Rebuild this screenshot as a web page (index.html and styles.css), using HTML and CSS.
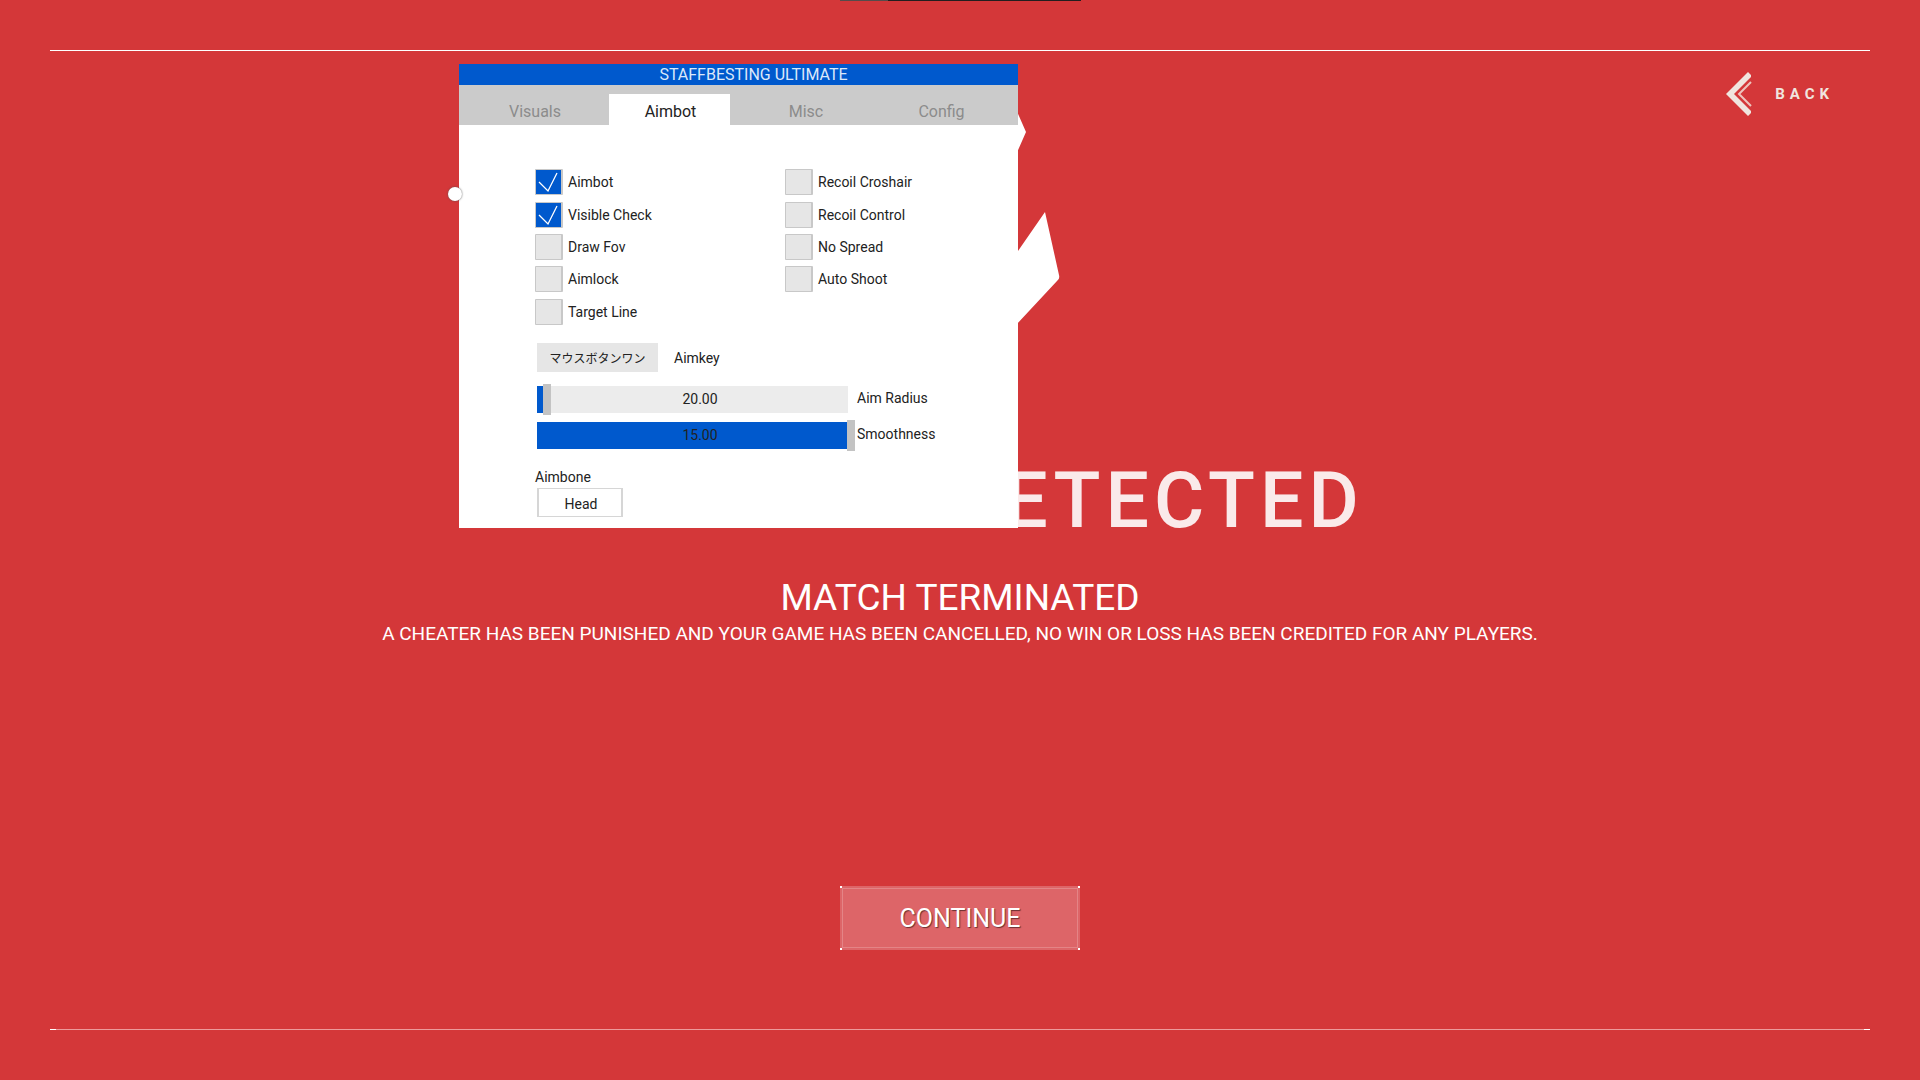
FILE: index.html
```html
<!DOCTYPE html>
<html lang="en">
<head>
<meta charset="utf-8">
<meta name="viewport" content="width=device-width, initial-scale=1">
<title>Match terminated</title>
<link rel="stylesheet" href="styles.css">
</head>
<body>
<div class="notch"></div>
<main class="frame">
  <button class="back" type="button">
    <svg class="back-icon" viewBox="0 0 26 44" aria-hidden="true">
      <path d="M22 0 L25 3 V5 L8 22 L25 39 V41 L22 44 L0 22 Z" fill="#f0e5df"/>
      <path d="M25 10 L13 22 L25 34" fill="none" stroke="#eec4bd" stroke-width="2"/>
    </svg>
    <span>BACK</span>
  </button>
  <svg class="emblem" viewBox="0 0 200 240" aria-hidden="true">
    <path d="M100 0 H152 L166 32 L152 64 L158 151 L185 112 L199 175 Q200 179 197 181 L156 225 H44 L3 181 Q0 179 1 175 L15 112 L42 151 L48 64 L34 32 L48 0 Z" fill="#fff"/>
  </svg>
  <h1 class="headline">CHEATER DETECTED</h1>
  <h2 class="status">MATCH TERMINATED</h2>
  <p class="detail">A CHEATER HAS BEEN PUNISHED AND YOUR GAME HAS BEEN CANCELLED, NO WIN OR LOSS HAS BEEN CREDITED FOR ANY PLAYERS.</p>
  <button class="continue" type="button">CONTINUE</button>
</main>

<section class="panel">
  <h3 class="panel-title">STAFFBESTING ULTIMATE</h3>
  <nav class="tabs">
    <button class="tab" type="button">Visuals</button>
    <button class="tab tab-active" type="button">Aimbot</button>
    <button class="tab" type="button">Misc</button>
    <button class="tab" type="button">Config</button>
  </nav>
  <div class="panel-body">
    <div class="checks">
      <label class="check"><input type="checkbox" checked>Aimbot</label>
      <label class="check"><input type="checkbox" checked>Visible Check</label>
      <label class="check"><input type="checkbox">Draw Fov</label>
      <label class="check"><input type="checkbox">Aimlock</label>
      <label class="check"><input type="checkbox">Target Line</label>
      <label class="check"><input type="checkbox">Recoil Croshair</label>
      <label class="check"><input type="checkbox">Recoil Control</label>
      <label class="check"><input type="checkbox">No Spread</label>
      <label class="check"><input type="checkbox">Auto Shoot</label>
    </div>
    <div class="key-row">
      <button class="key" id="aimkey" type="button">マウスボタンワン</button>
      <label for="aimkey">Aimkey</label>
    </div>
    <div class="sliders">
      <div class="slider-row">
        <div class="slider">
          <input id="radius" type="range" min="0" max="1000" value="20" style="--fill: 2%">
          <output for="radius">20.00</output>
        </div>
        <label for="radius">Aim Radius</label>
      </div>
      <div class="slider-row">
        <div class="slider">
          <input id="smooth" type="range" min="0" max="15" value="15" style="--fill: 100%">
          <output for="smooth">15.00</output>
        </div>
        <label for="smooth">Smoothness</label>
      </div>
    </div>
    <div class="bone">
      <label for="bone">Aimbone</label>
      <select id="bone"><option>Head</option></select>
    </div>
  </div>
  <span class="handle"></span>
</section>
</body>
</html>
```

FILE: styles.css
```css
* {
  box-sizing: border-box;
}

body {
  margin: 0;
  position: relative;
  background: #d43739;
  color: #fff;
  font-family: Roboto, "Liberation Sans", sans-serif;
}

button,
select {
  font: inherit;
  color: inherit;
  border: 0;
  padding: 0;
  letter-spacing: inherit;
}

.notch {
  position: absolute;
  top: 0;
  left: 50%;
  width: 241px;
  height: 1px;
  margin-left: -120px;
  background: linear-gradient(90deg, #554b4b 20%, #221e1f 20%);
}

.frame {
  display: flex;
  flex-direction: column;
  align-items: center;
  min-height: 100vh;
  padding: 50px;
  position: relative;
}

.frame::before,
.frame::after {
  content: "";
  position: absolute;
  left: 50px;
  right: 50px;
  height: 1px;
}

.frame::before {
  top: 50px;
  background: #fff;
}

.frame::after {
  bottom: 50px;
  background: linear-gradient(90deg, #fff 6px, #ed9a9a 6px, #ed9a9a calc(100% - 6px), #fff calc(100% - 6px));
}

.back {
  position: absolute;
  top: 72px;
  right: 86px;
  display: flex;
  align-items: center;
  gap: 23px;
  background: none;
  color: #f0e5df;
  font-size: 15px;
  font-weight: 700;
  letter-spacing: 5px;
}

.back-icon {
  width: 26px;
  height: 44px;
}

.emblem {
  width: 200px;
  height: 240px;
  margin-top: 50px;
}

.headline {
  margin: 121px 0 0;
  font-size: 77px;
  font-weight: 500;
  line-height: 80px;
  letter-spacing: 5px;
  color: #faeaea;
}

.status {
  margin: 37px 0 0;
  font-size: 37px;
  font-weight: 400;
  line-height: 40px;
}

.detail {
  margin: 4px 0 0;
  font-size: 19px;
  line-height: 24px;
  text-align: center;
}

.continue {
  width: 240px;
  height: 64px;
  margin-top: 240px;
  border: 2px solid transparent;
  outline: 1px solid #e48486;
  outline-offset: -3px;
  background:
    linear-gradient(#fff, #fff) 0 0 / 2px 2px border-box,
    linear-gradient(#fff, #fff) 100% 0 / 2px 2px border-box,
    linear-gradient(#fff, #fff) 0 100% / 2px 2px border-box,
    linear-gradient(#fff, #fff) 100% 100% / 2px 2px border-box,
    #dd6568;
  background-repeat: no-repeat;
  font-size: 25px;
  text-shadow: 1px 1px 1px #6b3030;
}

.panel {
  position: absolute;
  top: 64px;
  left: 459px;
  width: 559px;
  background: #fff;
  color: #222;
  font-size: 14px;
}

.panel-title {
  margin: 0;
  background: #0059cd;
  color: #dbe8fa;
  font-size: 16px;
  font-weight: 400;
  line-height: 21px;
  text-align: center;
  padding-left: 30px;
}

.tabs {
  display: grid;
  grid-template-columns: 150px 121px 150px 121px;
  height: 40px;
  padding-top: 9px;
  background: #cbcbcb;
}

.tab {
  background: none;
  color: #8c8c8c;
  font-size: 16px;
  padding: 4px 0 0 2px;
}

.tab-active {
  background: #fff;
  color: #222;
}

.panel-body {
  padding: 41px 0 11px 76px;
}

.checks {
  display: grid;
  grid-auto-flow: column;
  grid-template-rows: repeat(5, 1fr);
  grid-template-columns: 250px 1fr;
  height: 162px;
}

.check {
  display: flex;
  align-items: center;
  gap: 5px;
}

.check input {
  appearance: none;
  width: 28px;
  height: 26px;
  margin: 0;
  border: 1px solid #c8c8c8;
  border-right-width: 2px;
  border-radius: 1px;
  background: #e6e6e6;
}

.check input:checked {
  background: #0059cd url("data:image/svg+xml,%3Csvg xmlns='http://www.w3.org/2000/svg' viewBox='0 0 25 24'%3E%3Cpath d='M3 12 L12 21 L21 3' fill='none' stroke='white' stroke-width='1.3'/%3E%3C/svg%3E") center / 25px 24px no-repeat;
}

.key-row {
  display: flex;
  align-items: center;
  gap: 16px;
  margin: 15px 0 12px 2px;
}

.key {
  width: 121px;
  height: 29px;
  background: #e6e6e6;
  font-family: "Noto Sans CJK JP", sans-serif;
  font-size: 12px;
}

.sliders {
  display: flex;
  flex-direction: column;
  gap: 5px;
  margin-left: 2px;
}

.slider-row {
  display: flex;
  align-items: center;
  gap: 2px;
}

.slider-row label {
  padding-bottom: 4px;
}

.slider {
  display: grid;
  width: 318px;
}

.slider input,
.slider output {
  grid-area: 1 / 1;
}

.slider input {
  appearance: none;
  width: 100%;
  height: 31px;
  margin: 0;
  background:
    linear-gradient(#0059cd, #0059cd) 0 50% / var(--fill) 27px no-repeat,
    linear-gradient(#ececec, #ececec) 0 50% / 311px 27px no-repeat;
}

.slider input::-webkit-slider-thumb {
  appearance: none;
  width: 8px;
  height: 31px;
  background: #c3c3c3;
}

.slider output {
  place-self: center;
  padding: 0 0 2px 8px;
  pointer-events: none;
}

.bone {
  display: flex;
  flex-direction: column;
  align-items: flex-start;
  gap: 2px;
  margin-top: 18px;
}

.bone label {
  line-height: 17px;
}

.bone select {
  appearance: none;
  width: 86px;
  height: 29px;
  margin-left: 2px;
  padding: 2px 0 0 2px;
  border: 1px solid #d6d6d6;
  border-width: 1px 2px;
  background: #fff;
  text-align: center;
}

.handle {
  position: absolute;
  top: 123px;
  left: -11px;
  width: 14px;
  height: 14px;
  border-radius: 50%;
  background: #fff;
  box-shadow: 0 0 2px #555;
}
```
